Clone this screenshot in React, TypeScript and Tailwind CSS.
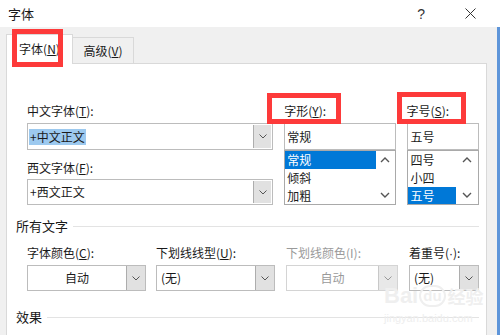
import React from "react";

const Chev = ({ c = "#555" }: { c?: string }) => (
  <svg width="8" height="5" viewBox="0 0 8 5">
    <path d="M0.5 0.5 L4 4 L7.5 0.5" fill="none" stroke={c} strokeWidth="1" />
  </svg>
);

const Up = () => (
  <svg width="10" height="6" viewBox="0 0 10 6">
    <path d="M1 5 L5 1 L9 5" fill="none" stroke="#555" strokeWidth="1.4" />
  </svg>
);
const Down = () => (
  <svg width="10" height="6" viewBox="0 0 10 6">
    <path d="M1 1 L5 5 L9 1" fill="none" stroke="#555" strokeWidth="1.4" />
  </svg>
);

function Drop({
  w,
  text,
  center,
  disabled,
}: {
  w: string;
  text: string;
  center?: boolean;
  disabled?: boolean;
}) {
  return (
    <div
      className={`mt-[4px] h-[26px] flex border ${w} ${
        disabled ? "border-[#d4d4d4]" : "border-[#bcbcbc]"
      } bg-white`}
    >
      <div
        className={`flex-1 flex items-center leading-[16px] ${
          center ? "justify-center" : "pl-[4px]"
        } ${disabled ? "text-[#9a9a9a]" : ""}`}
      >
        {text}
      </div>
      <div
        className={`w-[19px] flex items-center justify-center border-l ${
          disabled ? "bg-[#e8e8e8] border-[#c8c8c8]" : "bg-[#e1e1e1] border-[#adadad]"
        }`}
      >
        <Chev c={disabled ? "#999" : "#555"} />
      </div>
    </div>
  );
}

export default function App() {
  return (
    <div className="relative w-[500px] h-[335px] overflow-hidden bg-[#f0f0f0] font-['Noto_Sans_CJK_SC',sans-serif] text-[12px] text-[#1a1a1a] flex flex-col">
      {/* title bar */}
      <div className="h-[27px] bg-white flex items-center shrink-0">
        <span className="ml-[8px] text-[13px] leading-none">字体</span>
        <span className="ml-auto text-[14px] text-[#333] leading-none mr-[40px] font-['Liberation_Sans',sans-serif]">
          ?
        </span>
        <svg width="11" height="11" viewBox="0 0 11 11" className="mr-[24px]">
          <path d="M0.5 0.5 L10.5 10.5 M10.5 0.5 L0.5 10.5" stroke="#333" strokeWidth="1" />
        </svg>
      </div>

      <div className="flex flex-1 min-h-0">
        <div className="w-[497px] pl-[6px] pt-[8px] flex flex-col">
          {/* tabs */}
          <div className="flex items-end h-[29px] shrink-0">
            <div className="relative z-10 w-[67px] h-[30px] bg-white border border-b-0 border-[#d9d9d9] flex items-center justify-center leading-[16px] pb-[1px]">
              字体(<u>N</u>)
            </div>
            <div className="w-[61px] h-[27px] bg-[#f0f0f0] border border-l-0 border-b-0 border-[#d9d9d9] flex items-center justify-center leading-[16px]">
              高级(<u>V</u>)
            </div>
          </div>

          {/* panel */}
          <div className="flex-1 -mt-[1px] w-[481px] bg-white border border-b-0 border-[#d9d9d9] pl-[9px] pr-[7px] pt-[39px] flex flex-col">
            {/* top group */}
            <div className="flex pl-[11px]">
              <div className="w-[248px] flex flex-col">
                <div className="h-[16px] leading-[16px]">
                  中文字体(<u>T</u>):
                </div>
                <div className="mt-[4px] h-[27px] border border-[#bcbcbc] flex">
                  <div className="flex-1 flex items-center pl-[1px]">
                    <span className="bg-[#9cc9ef] px-[1px] leading-[16px]">+中文正文</span>
                  </div>
                  <div className="w-[18px] my-[1px] mr-[1px] bg-[#e1e1e1] border-l border-[#adadad] flex items-center justify-center">
                    <Chev />
                  </div>
                </div>
                <div className="mt-[10px] h-[16px] leading-[16px]">
                  西文字体(<u>F</u>):
                </div>
                <div className="mt-[3px] h-[26px] border border-[#bcbcbc] flex">
                  <div className="flex-1 flex items-center pl-[2px] leading-[16px]">+西文正文</div>
                  <div className="w-[18px] my-[1px] mr-[1px] bg-[#e1e1e1] border-l border-[#adadad] flex items-center justify-center">
                    <Chev />
                  </div>
                </div>
              </div>

              <div className="ml-[11px] w-[112px] flex flex-col">
                <div className="h-[16px] leading-[16px]">
                  字形(<u>Y</u>):
                </div>
                <div className="mt-[4px] h-[27px] border border-[#bcbcbc] flex items-center pl-[2px] leading-[16px]">
                  常规
                </div>
                <div className="h-[55px] border border-[#a9a9a9] flex overflow-hidden">
                  <div className="flex-1 flex flex-col">
                    <div className="h-[18px] leading-[18px] bg-[#0078d7] text-white pl-[2px]">常规</div>
                    <div className="h-[18px] leading-[18px] pl-[2px]">倾斜</div>
                    <div className="h-[18px] leading-[18px] pl-[2px]">加粗</div>
                  </div>
                  <div className="w-[19px] flex flex-col items-center justify-between py-[6px]">
                    <Up />
                    <Down />
                  </div>
                </div>
              </div>

              <div className="ml-[11px] w-[73px] flex flex-col">
                <div className="h-[16px] leading-[16px]">
                  字号(<u>S</u>):
                </div>
                <div className="mt-[4px] h-[27px] border border-[#bcbcbc] flex items-center pl-[3px] leading-[16px]">
                  五号
                </div>
                <div className="h-[55px] border border-[#a9a9a9] flex overflow-hidden">
                  <div className="flex-1 flex flex-col">
                    <div className="h-[18px] leading-[18px] pl-[3px]">四号</div>
                    <div className="h-[18px] leading-[18px] pl-[3px]">小四</div>
                    <div className="h-[18px] leading-[18px] bg-[#0078d7] text-white pl-[3px]">五号</div>
                  </div>
                  <div className="w-[22px] flex flex-col items-center justify-between py-[6px]">
                    <Up />
                    <Down />
                  </div>
                </div>
              </div>
            </div>

            {/* 所有文字 */}
            <div className="mt-[13px] flex items-center h-[16px]">
              <span className="text-[13px] leading-[16px]">所有文字</span>
              <div className="flex-1 h-px bg-[#e3e3e3] ml-[5px]" />
            </div>

            <div className="mt-[11px] flex pl-[11px]">
              <div className="w-[119px] flex flex-col">
                <div className="h-[16px] leading-[16px]">
                  字体颜色(<u>C</u>):
                </div>
                <Drop w="w-[119px]" text="自动" center />
              </div>
              <div className="ml-[10px] w-[119px] flex flex-col">
                <div className="h-[16px] leading-[16px]">
                  下划线线型(<u>U</u>):
                </div>
                <Drop w="w-[119px]" text="(无)" />
              </div>
              <div className="ml-[11px] w-[112px] flex flex-col">
                <div className="h-[16px] leading-[16px] text-[#9a9a9a]">下划线颜色(I):</div>
                <Drop w="w-[112px]" text="自动" center disabled />
              </div>
              <div className="ml-[11px] w-[70px] flex flex-col">
                <div className="h-[16px] leading-[16px]">
                  着重号(<span className="font-['Liberation_Sans',sans-serif]">·</span>):
                </div>
                <Drop w="w-[70px]" text="(无)" />
              </div>
            </div>

            {/* 效果 */}
            <div className="mt-[18px] flex items-center h-[16px]">
              <span className="text-[13px] leading-[16px]">效果</span>
              <div className="flex-1 h-px bg-[#e3e3e3] ml-[5px]" />
            </div>
          </div>
        </div>
        <div className="w-[3px] bg-[#5e95d9]" />
      </div>

      {/* watermark */}
      <div className="absolute left-[384px] top-[284px] flex flex-col items-start pointer-events-none">
        <div className="flex items-center font-['Liberation_Sans',sans-serif] font-bold text-[22px] leading-[24px] text-[#efefef]">
          Bai
          <span className="ml-[1px] rounded-full border-2 border-[#efefef] px-[2px] text-[15px] leading-[18px]">du</span>
          <span className="ml-[2px] font-['Noto_Sans_CJK_SC',sans-serif] text-[18px]">经验</span>
        </div>
        <div className="mt-[4px] font-['Liberation_Sans',sans-serif] text-[11px] leading-[12px] text-[#eeeeee]">
          jingyan.baidu.com
        </div>
      </div>

      {/* red highlight boxes */}
      <div className="absolute left-[12px] top-[29px] w-[51px] h-[38px] border-[5px] border-[#fd3a3a] z-20" />
      <div className="absolute left-[267px] top-[93px] w-[74px] h-[31px] border-[5px] border-[#fd3a3a] z-20" />
      <div className="absolute left-[397px] top-[92px] w-[69px] h-[32px] border-[5px] border-[#fd3a3a] z-20" />
    </div>
  );
}
